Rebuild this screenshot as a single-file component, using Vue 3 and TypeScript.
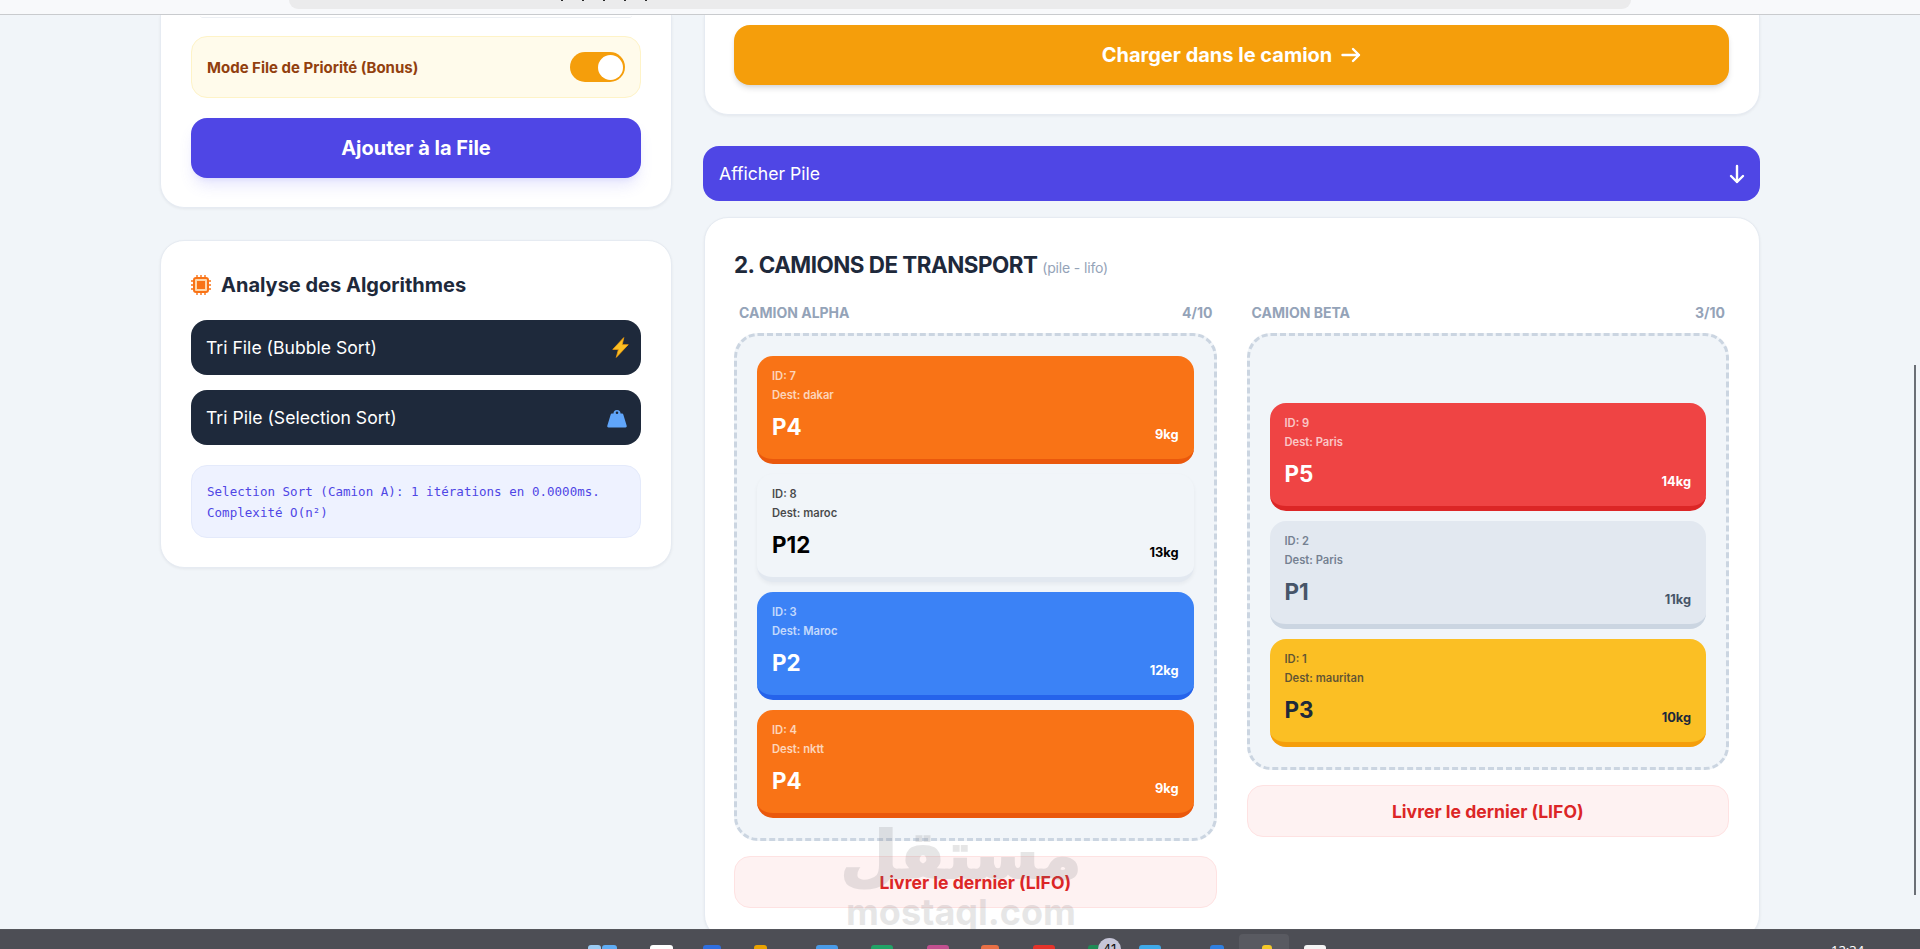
<template>
  <div class="screen">
    <div class="browser-bar">
      <div class="address-pill">
        <span v-for="n in 5" :key="n" class="url-tick"></span>
      </div>
    </div>

    <main class="page">
      <div class="left-col">
        <section class="card form-card">
          <div class="input-sliver"></div>
          <div class="priority-box">
            <span class="priority-label">Mode File de Priorité (Bonus)</span>
            <span class="toggle"><span class="toggle-knob"></span></span>
          </div>
          <button class="btn-add">Ajouter à la File</button>
        </section>

        <section class="card algo-card">
          <h2 class="algo-title">
            <svg class="cpu-icon" viewBox="0 0 20 20" width="20" height="20">
              <rect x="3" y="3" width="14" height="14" rx="2" fill="#fed7aa" stroke="#f97316" stroke-width="2" />
              <rect x="6" y="6" width="8" height="8" fill="#f97316" />
              <path d="M6 0v3M10 0v3M14 0v3M6 17v3M10 17v3M14 17v3M0 6h3M0 10h3M0 14h3M17 6h3M17 10h3M17 14h3" stroke="#f97316" stroke-width="1.4" />
            </svg>
            Analyse des Algorithmes
          </h2>
          <button class="btn-sort">
            <span>Tri File (Bubble Sort)</span>
            <svg class="bolt" viewBox="0 0 18 22" width="17" height="21">
              <path d="M12.500 0.500 0.800 13h6L4.500 21.500 17.200 8h-6.400z" fill="#fbbf24" stroke="#f59e0b" stroke-width="0.8" stroke-linejoin="round" />
            </svg>
          </button>
          <button class="btn-sort">
            <span>Tri Pile (Selection Sort)</span>
            <svg viewBox="0 0 20 21" width="20" height="21">
              <path d="M6.500 6.500a3.500 3.500 0 1 1 7 0h1.600c.6 0 1 .3 1.200.9l3.400 11.400c.2.900-.3 1.700-1.200 1.700H1.500c-.9 0-1.400-.8-1.200-1.700L3.700 7.400c.2-.6.6-.9 1.200-.9zM10 4.500a1.300 1.300 0 1 0 0 2.600 1.300 1.300 0 0 0 0-2.600z" fill="#60a5fa" fill-rule="evenodd" />
            </svg>
          </button>
          <div class="algo-log">Selection Sort (Camion A): 1 itérations en 0.0000ms.<br />Complexité O(n²)</div>
        </section>
      </div>

      <div class="right-col">
        <section class="card load-card">
          <button class="btn-load">
            Charger dans le camion
            <svg viewBox="0 0 20 16" width="20" height="16">
              <path d="M1.500 8h16.500M12 2l6 6-6 6" fill="none" stroke="#fff" stroke-width="2.400" stroke-linecap="round" stroke-linejoin="round" />
            </svg>
          </button>
        </section>

        <button class="btn-toggle-stack">
          <span>Afficher Pile</span>
          <svg viewBox="0 0 16 20" width="16" height="20">
            <path d="M8 2v16M2 12l6 6 6-6" fill="none" stroke="#fff" stroke-width="2.400" stroke-linecap="round" stroke-linejoin="round" />
          </svg>
        </button>

        <section class="card trucks-card">
          <h2 class="trucks-title">2. CAMIONS DE TRANSPORT <small>(pile - lifo)</small></h2>
          <div class="trucks-grid">
            <div v-for="truck in trucks" :key="truck.name">
              <div class="truck-head">
                <span>{{ truck.name }}</span>
                <span>{{ truck.load }}</span>
              </div>
              <div class="truck-zone">
                <div v-for="box in truck.boxes" :key="box.id" class="box" :class="box.tone">
                  <div class="box-meta">ID: {{ box.id }}</div>
                  <div class="box-meta">Dest: {{ box.dest }}</div>
                  <div class="box-row">
                    <span class="box-prio">{{ box.prio }}</span>
                    <span class="box-weight">{{ box.weight }}kg</span>
                  </div>
                </div>
              </div>
              <button class="btn-deliver">Livrer le dernier (LIFO)</button>
            </div>
          </div>
        </section>
      </div>

      <div class="watermark">
        <div class="watermark-ar">مستقل</div>
        <div class="watermark-en">mostaql.com</div>
      </div>
    </main>

    <div class="scroll-thumb"></div>

    <footer class="taskbar">
      <span
        v-for="icon in taskbarIcons"
        :key="icon.x"
        class="task-icon"
        :style="{ left: icon.x + 'px', width: icon.w + 'px', background: icon.color }"
      ></span>
      <span class="task-active"></span>
      <span class="task-badge">41</span>
      <span class="task-clock">12:34</span>
    </footer>
  </div>
</template>

<script setup lang="ts">
interface Box {
  id: number;
  dest: string;
  prio: string;
  weight: number;
  tone: string;
}

const trucks: { name: string; load: string; boxes: Box[] }[] = [
  {
    name: 'CAMION ALPHA',
    load: '4/10',
    boxes: [
      { id: 7, dest: 'dakar', prio: 'P4', weight: 9, tone: 'orange' },
      { id: 8, dest: 'maroc', prio: 'P12', weight: 13, tone: 'light' },
      { id: 3, dest: 'Maroc', prio: 'P2', weight: 12, tone: 'blue' },
      { id: 4, dest: 'nktt', prio: 'P4', weight: 9, tone: 'orange' },
    ],
  },
  {
    name: 'CAMION BETA',
    load: '3/10',
    boxes: [
      { id: 9, dest: 'Paris', prio: 'P5', weight: 14, tone: 'red' },
      { id: 2, dest: 'Paris', prio: 'P1', weight: 11, tone: 'slate' },
      { id: 1, dest: 'mauritan', prio: 'P3', weight: 10, tone: 'yellow' },
    ],
  },
];

// only the top few pixels of the taskbar icons are on screen
const taskbarIcons = [
  { x: 588, w: 13, color: '#9ccbf3' },
  { x: 602, w: 15, color: '#60adf5' },
  { x: 650, w: 23, color: '#ffffff' },
  { x: 703, w: 18, color: '#2f6fe0' },
  { x: 754, w: 13, color: '#eaa300' },
  { x: 816, w: 22, color: '#4a9be8' },
  { x: 871, w: 22, color: '#21a366' },
  { x: 927, w: 22, color: '#c2508f' },
  { x: 981, w: 18, color: '#e86f45' },
  { x: 1033, w: 22, color: '#e5332a' },
  { x: 1088, w: 12, color: '#1f8a55' },
  { x: 1139, w: 22, color: '#3fa9e8' },
  { x: 1210, w: 14, color: '#2f7fe0' },
  { x: 1262, w: 10, color: '#f5c518' },
  { x: 1304, w: 22, color: '#f4f4f4' },
];
</script>

<style scoped>
.screen {
  position: relative;
  display: flex;
  flex-direction: column;
  width: 1920px;
  height: 949px;
  overflow: hidden;
  background: #f1f5f9;
  font-family: Inter, "Noto Sans", sans-serif;
  color: #1e293b;
}
.browser-bar {
  flex: none;
  height: 14px;
  background: #f8f9fb;
  border-bottom: 1px solid #c9cbce;
}
.address-pill {
  display: flex;
  gap: 19px;
  box-sizing: border-box;
  width: 1342px;
  height: 9px;
  margin-left: 289px;
  padding-left: 272px;
  background: #ebebec;
  border-radius: 0 0 10px 10px;
}
.url-tick {
  width: 2px;
  height: 1px;
  background: #2b2b2b;
}
.page {
  position: relative;
  flex: 1;
  min-height: 0;
  overflow: hidden;
  display: grid;
  grid-template-columns: 512px 1056px;
  column-gap: 32px;
  align-items: start;
  padding-left: 160px;
}
.left-col {
  display: flex;
  flex-direction: column;
  gap: 32px;
}
.card {
  box-sizing: border-box;
  background: #fff;
  border: 1px solid #e6ebf2;
  border-radius: 24px;
  box-shadow: 0 1px 3px rgba(15, 23, 42, 0.06);
}
.form-card {
  height: 193px;
  padding: 0 30px;
  border-top: none;
  border-radius: 0 0 24px 24px;
}
.input-sliver {
  height: 2px;
  margin: 0 9px 18px;
  border-bottom: 1px solid #eceff3;
  border-radius: 0 0 12px 12px;
}
.priority-box {
  box-sizing: border-box;
  display: flex;
  align-items: center;
  justify-content: space-between;
  height: 62px;
  padding: 0 15px;
  background: #fffbeb;
  border: 1px solid #fef3c7;
  border-radius: 16px;
}
.priority-label {
  font-size: 15px;
  font-weight: 700;
  color: #92400e;
}
.toggle {
  display: flex;
  align-items: center;
  justify-content: flex-end;
  box-sizing: border-box;
  width: 55px;
  height: 30px;
  padding-right: 2px;
  background: #f59e0b;
  border-radius: 15px;
}
.toggle-knob {
  width: 25px;
  height: 25px;
  background: #fff;
  border-radius: 50%;
}
button {
  display: block;
  box-sizing: border-box;
  width: 100%;
  border: none;
  font-family: inherit;
  color: #fff;
}
.btn-add {
  height: 60px;
  margin-top: 20px;
  background: #4f46e5;
  border-radius: 16px;
  font-size: 20px;
  font-weight: 700;
  box-shadow: 0 10px 15px -3px rgba(99, 102, 241, 0.16), 0 4px 6px -4px rgba(99, 102, 241, 0.16);
}
.algo-card {
  height: 328px;
  padding: 30px;
}
.algo-title {
  display: flex;
  align-items: center;
  gap: 10px;
  height: 28px;
  margin: 0 0 21px;
  font-size: 20px;
  font-weight: 700;
}
.btn-sort {
  display: flex;
  align-items: center;
  justify-content: space-between;
  height: 55px;
  margin-bottom: 15px;
  padding: 0 14px 0 15px;
  background: #1e293b;
  border-radius: 16px;
  font-size: 17.6px;
  font-weight: 400;
}
.bolt {
  margin-right: -2px;
}
.algo-log {
  box-sizing: border-box;
  height: 73px;
  margin-top: 20px;
  padding: 15px 15px 0;
  background: #eef2ff;
  border: 1px solid #e4eafb;
  border-radius: 16px;
  font-family: "DejaVu Sans Mono", monospace;
  font-size: 12.5px;
  line-height: 21px;
  letter-spacing: 0.03px;
  color: #4f46e5;
}
.right-col {
  display: flex;
  flex-direction: column;
}
.load-card {
  height: 100px;
  padding: 10px 30px 0 29px;
  border-top: none;
  border-radius: 0 0 24px 24px;
}
.btn-load {
  display: flex;
  align-items: center;
  justify-content: center;
  gap: 9px;
  height: 60px;
  background: #f59e0b;
  border-radius: 16px;
  font-size: 20px;
  font-weight: 700;
  box-shadow: 0 4px 6px -1px rgba(15, 23, 42, 0.14), 0 2px 4px -2px rgba(15, 23, 42, 0.1);
}
.btn-toggle-stack {
  display: flex;
  align-items: center;
  justify-content: space-between;
  width: calc(100% + 1px);
  height: 55px;
  margin: 31px 0 16px -1px;
  padding: 0 15px 0 16px;
  background: #4f46e5;
  border-radius: 16px;
  font-size: 17.6px;
  font-weight: 400;
}
.trucks-card {
  height: 722px;
  padding: 30px 30px 0 29px;
}
.trucks-title {
  height: 34px;
  margin: 0 0 20px;
  font-size: 22.4px;
  font-weight: 700;
  line-height: 34px;
  letter-spacing: -0.5px;
}
.trucks-title small {
  font-size: 14px;
  font-weight: 400;
  letter-spacing: -0.15px;
  color: #94a3b8;
}
.trucks-grid {
  display: grid;
  grid-template-columns: 1fr 1fr;
  column-gap: 30px;
  align-items: start;
}
.truck-head {
  display: flex;
  justify-content: space-between;
  height: 20px;
  margin-bottom: 11px;
  padding: 0 4px 0 5px;
  font-size: 14px;
  font-weight: 700;
  line-height: 21px;
  color: #94a3b8;
}
.truck-zone {
  box-sizing: border-box;
  display: flex;
  flex-direction: column;
  justify-content: flex-end;
  gap: 10px;
  min-height: 437px;
  padding: 20px;
  background: #f1f5f9;
  border: 3px dashed #cbd5e1;
  border-radius: 24px;
}
.box {
  box-sizing: border-box;
  height: 108px;
  padding: 11px 15px 0;
  border-bottom: 5px solid;
  border-radius: 16px;
  color: #fff;
}
.box-meta {
  font-size: 11.2px;
  font-weight: 600;
  line-height: 19px;
  opacity: 0.7;
}
.box-row {
  display: flex;
  justify-content: space-between;
  align-items: flex-end;
  margin-top: 6px;
}
.box-prio {
  font-size: 22.4px;
  font-weight: 700;
  line-height: 32px;
}
.box-weight {
  font-size: 12.8px;
  font-weight: 700;
  line-height: 16px;
}
.orange {
  background: #f97316;
  border-color: #ea580c;
}
.light {
  background: #f1f5f9;
  border-color: #e2e8f0;
  color: #000;
  box-shadow: 0 2px 4px rgba(15, 23, 42, 0.05);
}
.blue {
  background: #3b82f6;
  border-color: #2563eb;
}
.red {
  background: #ef4444;
  border-color: #dc2626;
}
.slate {
  background: #e2e8f0;
  border-color: #cbd5e1;
  color: #475569;
}
.yellow {
  background: #fbbf24;
  border-color: #f59e0b;
  color: #1e293b;
}
.btn-deliver {
  height: 52px;
  margin-top: 15px;
  background: #fef2f2;
  border: 1px solid #fee2e2;
  border-radius: 16px;
  font-size: 17.6px;
  font-weight: 700;
  color: #dc2626;
}
.watermark {
  position: absolute;
  left: 845px;
  top: 805px;
  width: 232px;
  text-align: center;
  color: #6e6e73;
  opacity: 0.17;
  pointer-events: none;
}
.watermark-ar {
  display: flex;
  justify-content: center;
  height: 72px;
  font-family: "DejaVu Sans", sans-serif;
  font-size: 66px;
  font-weight: 700;
  line-height: 72px;
  -webkit-text-stroke: 2px #6e6e73;
  white-space: nowrap;
}
.watermark-en {
  font-family: Inter, sans-serif;
  font-size: 36px;
  font-weight: 700;
  line-height: 40px;
}
.scroll-thumb {
  position: absolute;
  left: 1914px;
  top: 365px;
  width: 2px;
  height: 530px;
  background: #6b6f76;
}
.taskbar {
  position: relative;
  flex: none;
  height: 20px;
  background: #4d4e55;
  border-top: 1px solid #55565c;
  box-sizing: border-box;
  overflow: hidden;
}
.task-icon {
  position: absolute;
  top: 15px;
  height: 8px;
  border-radius: 3px 3px 0 0;
}
.task-active {
  position: absolute;
  left: 1239px;
  top: 4px;
  width: 50px;
  height: 20px;
  background: rgba(255, 255, 255, 0.07);
  border-radius: 4px 4px 0 0;
}
.task-badge {
  position: absolute;
  left: 1098px;
  top: 8px;
  width: 23px;
  height: 23px;
  background: #c6c5d8;
  border-radius: 50%;
  font-size: 13px;
  line-height: 22px;
  text-align: center;
  color: #111;
}
.task-clock {
  position: absolute;
  left: 1831px;
  top: 12px;
  font-family: "Noto Sans", sans-serif;
  font-size: 13px;
  line-height: 16px;
  color: #fff;
}
</style>

<style>
html,
body {
  margin: 0;
  background: #f1f5f9;
}
</style>
